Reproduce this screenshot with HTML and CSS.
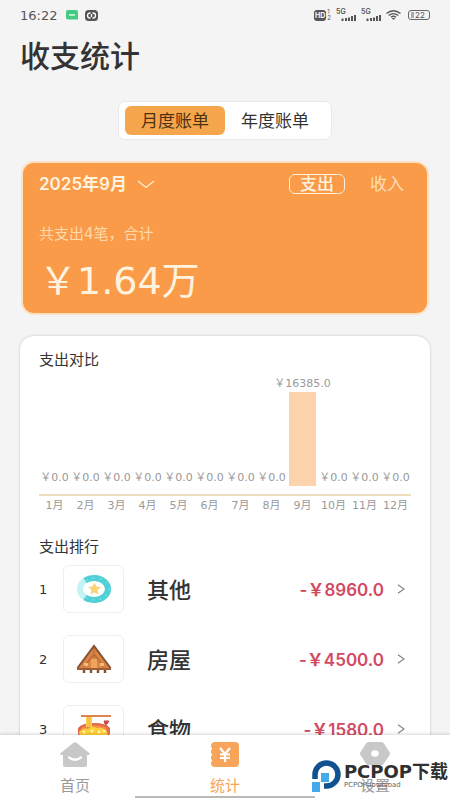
FILE: index.html
```html
<!DOCTYPE html>
<html lang="zh-CN">
<head>
<meta charset="utf-8">
<meta name="viewport" content="width=device-width, initial-scale=1">
<title>收支统计</title>
<link rel="stylesheet" href="styles.css">
</head>
<body>
<header class="status">
  <div class="status-group">
    <span class="clock">16:22</span>
    <svg width="12" height="10" viewBox="0 0 12 10"><path d="M2 0h8a2 2 0 0 1 2 2v7.500H2a2 2 0 0 1-2-2V2a2 2 0 0 1 2-2z" fill="#45ca83"/><path d="M3 5h6" stroke="#d8f6e6" stroke-width="1.500"/></svg>
    <svg width="13" height="11" viewBox="0 0 13 11"><rect width="13" height="11" rx="3.500" fill="#555"/><path d="M5.500 3H5a2.500 2.500 0 0 0 0 5h.5M7.500 3H8a2.500 2.500 0 0 1 0 5h-.5M6.500 4v3" fill="none" stroke="#fff" stroke-width="1.300"/></svg>
  </div>
  <div class="status-group status-right">
    <span class="hd"><b>HD</b><small>1<br>2</small></span>
    <span class="signal"><i>5G</i><svg width="20" height="11" viewBox="0 0 20 11"><path d="M6.500 11V8.500M10 11V8M13 11V7.500M16 11V6M19 11V5" stroke="#555" stroke-width="2"/></svg></span>
    <span class="signal"><i>5G</i><svg width="20" height="11" viewBox="0 0 20 11"><path d="M6.500 11V8.500M10 11V8M13 11V7.500M16 11V6M19 11V5" stroke="#555" stroke-width="2"/></svg></span>
    <svg width="15" height="10" viewBox="0 0 15 10"><g fill="none" stroke="#555" stroke-width="1.400"><path d="M.5 3.500q7-5.500 14 0"/><path d="M2.700 5.500q4.800-3.800 9.600 0"/><path d="M5 7.300q2.500-2 5 0"/></g><path d="M5.800 8h3.400L7.500 10z" fill="#555"/></svg>
    <span class="battery"><i></i>22</span>
  </div>
</header>

<main class="page">
  <h1>收支统计</h1>

  <div class="segment">
    <button class="segment-item active" type="button">月度账单</button>
    <button class="segment-item" type="button">年度账单</button>
  </div>

  <section class="summary">
    <div class="summary-head">
      <button class="month" type="button">2025年9月
        <svg width="18" height="9" viewBox="0 0 18 9"><path d="M1 1l8 6.500L17 1" fill="none" stroke="#fff0d8" stroke-width="1.300"/></svg>
      </button>
      <button class="kind selected" type="button">支出</button>
      <button class="kind" type="button">收入</button>
    </div>
    <p class="summary-note">共支出4笔，合计</p>
    <p class="total">￥1.64万</p>
  </section>

  <section class="details">
    <h2>支出对比</h2>
    <div class="chart">
      <div class="col"><span>￥0.0</span></div>
      <div class="col"><span>￥0.0</span></div>
      <div class="col"><span>￥0.0</span></div>
      <div class="col"><span>￥0.0</span></div>
      <div class="col"><span>￥0.0</span></div>
      <div class="col"><span>￥0.0</span></div>
      <div class="col"><span>￥0.0</span></div>
      <div class="col"><span>￥0.0</span></div>
      <div class="col"><span>￥16385.0</span><div class="bar"></div></div>
      <div class="col"><span>￥0.0</span></div>
      <div class="col"><span>￥0.0</span></div>
      <div class="col"><span>￥0.0</span></div>
    </div>
    <div class="months">
      <span>1月</span><span>2月</span><span>3月</span><span>4月</span><span>5月</span><span>6月</span><span>7月</span><span>8月</span><span>9月</span><span>10月</span><span>11月</span><span>12月</span>
    </div>

    <h2>支出排行</h2>
    <ol class="ranking">
      <li>
        <span class="rank">1</span>
        <span class="thumb">
          <svg width="36" height="30" viewBox="0 0 36 30"><ellipse cx="18" cy="15" rx="14" ry="11" fill="none" stroke="#c5f3f3" stroke-width="6"/><path d="M9 6.600A14 11 0 1 1 9 23.400" fill="none" stroke="#4fd0d6" stroke-width="6"/><path d="M10 6.500A14 11 0 1 1 10 23.500" fill="none" stroke="#a2e8ea" stroke-width="1" stroke-dasharray="2 5"/><path d="M18.500 8.500l2 4 4.500.5-3.500 3 1 4.500-4-2.300-4 2.300 1-4.500-3.500-3 4.500-.5z" fill="#f8d477"/></svg>
        </span>
        <span class="name">其他</span>
        <span class="cost">-￥8960.0</span>
        <svg class="arrow" width="8" height="10" viewBox="0 0 8 10"><path d="M1 .8L7 5 1 9.200" fill="none" stroke="#888" stroke-width="1.300"/></svg>
      </li>
      <li>
        <span class="rank">2</span>
        <span class="thumb">
          <svg width="36" height="30" viewBox="0 0 36 30"><path d="M18 2L2 24h32z" fill="#d98546"/><path d="M18 2v12M18 10l-10 13M18 10l10 13" stroke="#bd6a35" stroke-width="1.300"/><path d="M1.500 24L18 2l16.500 22" fill="none" stroke="#885233" stroke-width="2"/><path d="M15 15h6v9h-6z" fill="#f0a35a"/><path d="M8 19h4v3H8zM24 19h4v3h-4z" fill="#f4bd79"/><path d="M1 24h34v2H1z" fill="#a05c35"/><path d="M8 26v3M15 26v3M22 26v3M29 26v3" stroke="#885233" stroke-width="2.500"/></svg>
        </span>
        <span class="name">房屋</span>
        <span class="cost">-￥4500.0</span>
        <svg class="arrow" width="8" height="10" viewBox="0 0 8 10"><path d="M1 .8L7 5 1 9.200" fill="none" stroke="#888" stroke-width="1.300"/></svg>
      </li>
      <li>
        <span class="rank">3</span>
        <span class="thumb">
          <svg width="36" height="30" viewBox="0 0 36 30"><path d="M2 14q4-5 16-5t16 5v5q-2 9-10 10H12Q3 27 2 19z" fill="#e5674a"/><ellipse cx="18" cy="15" rx="13" ry="4" fill="#f28a46"/><path d="M10 2h6v11h-6z" fill="#ffd455"/><path d="M12 3v10M14 3v10" stroke="#f2af35"/><path d="M5 1h30v2H5z" fill="#dc8450"/><path d="M3 18q4-5 9-3 4-4 9-1 5-2 10 3l1 5q-12 6-28 1z" fill="#ffcf38"/><g fill="#fff4b0"><circle cx="8" cy="18" r="1.500"/><circle cx="16" cy="17" r="1.500"/><circle cx="23" cy="18" r="1.500"/><circle cx="28" cy="17" r="1.500"/></g><path d="M30 12V8M28 7h5l-2 3h-2z" stroke="#bf413e" fill="#df5751"/></svg>
        </span>
        <span class="name">食物</span>
        <span class="cost">-￥1580.0</span>
        <svg class="arrow" width="8" height="10" viewBox="0 0 8 10"><path d="M1 .8L7 5 1 9.200" fill="none" stroke="#888" stroke-width="1.300"/></svg>
      </li>
    </ol>
  </section>
</main>

<nav class="tabs">
  <a class="tab" href="#home">
    <svg width="30" height="25" viewBox="0 0 30 25"><path d="M13.500.8q1.500-1.200 3 0l13 10.400q1 1.300-.7 1.800H27v9.500q0 2.500-2.500 2.500h-19Q3 25 3 22.500V13H1.200q-1.700-.5-.7-1.800z" fill="#c8c8c8"/><path d="M9 15.500q6 4.500 12 0" fill="none" stroke="#fff" stroke-width="2.200" stroke-linecap="round"/></svg>
    <span>首页</span>
  </a>
  <a class="tab current" href="#stats">
    <svg width="28" height="25" viewBox="0 0 28 25"><path d="M4 0h20q4 0 4 4v17q0 4-4 4H4q-4 0-4-4v-1q2.500-1 0-3v-3q2.500-1 0-3V8q2.500-1 0-3V4q0-4 4-4z" fill="#f9a45b"/><path d="M9 6l5 6 5-6M14 12v8M9 12.500h10M9 16h10" fill="none" stroke="#fff" stroke-width="2.200"/></svg>
    <span>统计</span>
  </a>
  <a class="tab" href="#settings">
    <svg width="30" height="23" viewBox="0 0 30 23"><path d="M8.500 0h13q1.500 0 2.500 1.500l5.500 8.500q1 1.500 0 3L24 21.500q-1 1.500-2.500 1.500h-13Q7 23 6 21.500L.5 13q-1-1.500 0-3L6 1.500Q7 0 8.500 0z" fill="#c8c8c8"/><ellipse cx="15" cy="11.500" rx="3.800" ry="3.200" fill="#fff"/></svg>
    <span>设置</span>
  </a>
  <div class="home-line"></div>
  <div class="brand">
    <svg width="29" height="33" viewBox="0 0 29 33"><path d="M3 19V14.500A11.500 11.500 0 1 1 14.500 26H12" fill="none" stroke="#10518f" stroke-width="5.500"/><path d="M9 13h8v9H8v10H0V22h9z" fill="#46a9ea"/></svg>
    <div class="brand-text"><b>PCPOP<span>下载</span></b><small>PCPOPdownload</small></div>
  </div>
</nav>
</body>
</html>
```
FILE: styles.css
```css
* { box-sizing: border-box; }
body {
  margin: 0;
  height: 100vh;
  display: flex;
  flex-direction: column;
  overflow: hidden;
  background: #f4f4f4;
  color: #333;
  font-family: Inter, "Noto Sans CJK SC", sans-serif;
}
h1, h2, p, ol { margin: 0; padding: 0; }
button { border: 0; padding: 0; background: none; color: inherit; font: inherit; }
svg { display: block; flex: none; }
.clock, .total, .summary-note, .col, .months, .rank {
  font-family: "DejaVu Sans", "Noto Sans CJK SC", sans-serif;
}

.status {
  flex: none;
  display: flex;
  align-items: center;
  justify-content: space-between;
  height: 30px;
  padding: 0 20px;
  color: #555;
}
.status-group { display: flex; align-items: center; gap: 7px; }
.clock { font-size: 13px; margin-right: 2px; }
.status-right { gap: 5px; }
.hd { display: flex; align-items: center; gap: 1px; }
.hd b { padding: 0 1px; border-radius: 3px; background: #555; color: #fff; font-size: 7px; line-height: 11px; }
.hd small { font-size: 6px; line-height: 6px; }
.signal { position: relative; }
.signal i { position: absolute; left: 0; top: -1px; font-size: 7px; line-height: 6px; font-style: normal; font-weight: 600; }
.battery {
  display: flex;
  align-items: center;
  gap: 1px;
  width: 22px;
  height: 10px;
  margin-left: 2px;
  padding-left: 2px;
  border: 1px solid #666;
  border-radius: 3px;
  font-size: 8px;
}
.battery i { width: 3px; height: 6px; background: #aaa; }

.page { flex: 1; min-height: 0; overflow: hidden; padding: 8px 20px 0; }
h1 { font-size: 30px; line-height: 36px; font-weight: 500; }

.segment {
  display: flex;
  width: fit-content;
  margin: 27px auto 0;
  padding: 4px 6px;
  border: 1px solid #e8e8e8;
  border-radius: 7px;
  background: #fff;
}
.segment-item { width: 100px; height: 29px; padding-top: 2px; border-radius: 6px; font-size: 17px; line-height: 27px; }
.segment-item.active { background: #f5a54c; color: #4c3112; }

.summary {
  height: 154px;
  margin: 21px 1px 0;
  padding: 11px 12px 0 16px;
  border: 2px solid #fde1c2;
  border-radius: 13px;
  background: #f99b48;
  color: #fff3df;
}
.summary-head { display: flex; align-items: center; height: 20px; }
.month { display: flex; align-items: center; gap: 10px; margin-right: auto; font-size: 17px; line-height: 20px; font-weight: 600; }
.kind { width: 56px; height: 20px; border: 1px solid transparent; border-radius: 6px; font-size: 17px; line-height: 18px; color: #ffdeb8; }
.kind + .kind { margin-left: 14px; }
.kind.selected { border-color: #fff0d8; color: #fff3df; font-weight: 500; }
.summary-note { margin-top: 30px; font-size: 15px; line-height: 20px; color: #ffd9ae; }
.total { margin-top: 14px; font-size: 38px; line-height: 46px; }

.details {
  margin-top: 21px;
  padding: 14px 19px 0;
  border-radius: 14px;
  background: #fff;
  box-shadow: 0 0 3px rgba(0, 0, 0, 0.2);
}
h2 { font-size: 15px; line-height: 20px; font-weight: 400; }
.chart {
  display: grid;
  grid-template-columns: repeat(12, minmax(0, 1fr));
  height: 126px;
  padding-bottom: 8px;
  border-bottom: 2px solid #eddfbd;
}
.col {
  display: flex;
  flex-direction: column;
  align-items: center;
  justify-content: flex-end;
  color: #999;
  font-size: 11px;
  line-height: 16px;
  white-space: nowrap;
}
.bar { width: 27px; height: 94px; background: #fdd3ae; }
.months {
  display: grid;
  grid-template-columns: repeat(12, minmax(0, 1fr));
  margin-bottom: 21px;
  color: #999;
  font-size: 11px;
  line-height: 20px;
  text-align: center;
  white-space: nowrap;
}

.ranking { list-style: none; }
.ranking li { display: flex; align-items: center; height: 48px; margin: 8px 0 22px; padding-right: 6px; }
.rank { width: 24px; font-size: 13px; }
.thumb {
  display: grid;
  place-items: center;
  width: 61px;
  height: 48px;
  border: 1px solid #eee;
  border-radius: 6px;
}
.name { margin-left: 23px; padding-bottom: 2px; font-size: 22px; font-weight: 500; }
.cost { margin-left: auto; padding-bottom: 2px; font-size: 17px; font-weight: 600; color: #d24a62; }
.arrow { margin-left: 13px; }

.tabs {
  flex: none;
  position: relative;
  display: grid;
  grid-template-columns: repeat(3, 1fr);
  height: 65px;
  background: #fff;
  box-shadow: 0 -1px 3px rgba(0, 0, 0, 0.16);
}
.tab {
  display: flex;
  flex-direction: column;
  align-items: center;
  justify-content: space-between;
  padding: 7px 0 4px;
  color: #999;
  font-size: 15px;
  line-height: 20px;
  text-decoration: none;
}
.tab.current { color: #f9a45b; }
.home-line { position: absolute; left: 30%; right: 30%; bottom: 2px; height: 2px; background: #b9b9b9; }
.brand { position: absolute; right: 2px; bottom: 7px; display: flex; align-items: center; gap: 3px; color: #303030; }
.brand-text { display: flex; flex-direction: column; font-family: "DejaVu Sans", "Noto Sans CJK SC", sans-serif; }
.brand-text b { font-size: 18px; line-height: 18px; }
.brand-text small { font-size: 7px; line-height: 9px; color: #666; }
```
